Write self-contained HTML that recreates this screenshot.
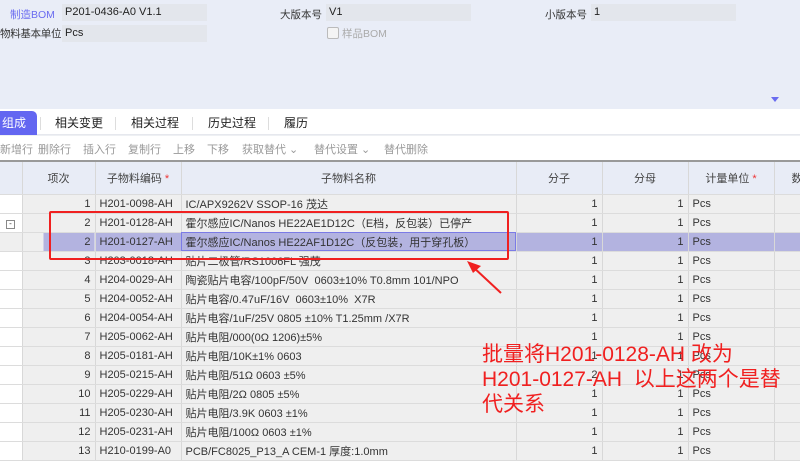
<!DOCTYPE html>
<html><head><meta charset="utf-8"><style>
*{margin:0;padding:0;box-sizing:border-box}
body{width:800px;height:451px;overflow:hidden;background:#eef0f3;font-family:"Liberation Sans","Noto Sans CJK SC",sans-serif;font-size:11px;color:#333;position:relative}
.top{position:absolute;left:0;top:0;width:800px;height:109px;background:#e9edf7}
.lbl{position:absolute;font-size:10.5px;color:#333;z-index:2}
.fld{position:absolute;height:17px;background:#e3e6ec;padding-left:3px;line-height:17px;font-size:11px;color:#222}
.tabs{position:absolute;top:109px;left:0;width:800px;height:26px;background:#fff;border-bottom:1px solid #e6e8ee}
.tab{position:absolute;top:2px;height:24px;line-height:24px;font-size:12px;color:#222}
.sep{position:absolute;top:8px;width:1px;height:13px;background:#ddd}
.tb{position:absolute;top:136px;left:0;width:800px;height:24px;background:#fff;color:#999;font-size:11px}
.tb span{position:absolute;top:5px}
table{position:absolute;top:160px;left:0;border-collapse:collapse;table-layout:fixed;width:820px}
td,th{height:19px;border-right:1px solid #d8d8d8;border-bottom:1px solid #dcdcdc;font-weight:normal;white-space:nowrap;overflow:hidden;padding:0 4px;font-size:11px;color:#333}
th{height:33px;background:#e8ecf6;border-top:2px solid #999;color:#444}
td{background:#efefef}
td.n{text-align:right}
tr.sel td{background:#b3b3e0}
.star{color:#e33}
</style></head><body>
<div class="top">
<div class="lbl" style="left:10px;top:7px;color:#6a6cf0">制造BOM</div>
<div class="fld" style="left:62px;top:4px;width:145px">P201-0436-A0 V1.1</div>
<div class="lbl" style="left:280px;top:7px">大版本号</div>
<div class="fld" style="left:326px;top:4px;width:145px">V1</div>
<div class="lbl" style="left:545px;top:7px">小版本号</div>
<div class="fld" style="left:591px;top:4px;width:145px">1</div>
<div class="lbl" style="left:0;top:26px;letter-spacing:-0.3px">物料基本单位</div>
<div class="fld" style="left:62px;top:25px;width:145px">Pcs</div>
<div style="position:absolute;left:327px;top:27px;width:12px;height:12px;border:1px solid #bbb;background:#f4f4f4;border-radius:2px"></div>
<div class="lbl" style="left:342px;top:26px;color:#aaa">样品BOM</div>
<div style="position:absolute;left:771px;top:97px;width:0;height:0;border-left:4px solid transparent;border-right:4px solid transparent;border-top:5px solid #6a6cf0"></div>
</div>
<div class="tabs">
<div class="tab" style="left:0;width:37px;background:#6366f1;color:#fff;border-radius:0 5px 0 0;padding-left:2px">组成</div>
<div class="sep" style="left:40px"></div>
<div class="tab" style="left:55px">相关变更</div>
<div class="sep" style="left:115px"></div>
<div class="tab" style="left:131px">相关过程</div>
<div class="sep" style="left:192px"></div>
<div class="tab" style="left:208px">历史过程</div>
<div class="sep" style="left:268px"></div>
<div class="tab" style="left:284px">履历</div>
</div>
<div class="tb"><span style="left:0">新增行</span><span style="left:38px">删除行</span><span style="left:83px">插入行</span><span style="left:128px">复制行</span><span style="left:173px">上移</span><span style="left:207px">下移</span><span style="left:242px">获取替代 ⌄</span><span style="left:314px">替代设置 ⌄</span><span style="left:384px">替代删除</span></div>
<table>
<colgroup><col style="width:22px"><col style="width:73px"><col style="width:86px"><col style="width:335px"><col style="width:86px"><col style="width:86px"><col style="width:86px"><col style="width:46px"></colgroup>
<tr><th></th><th>项次</th><th>子物料编码 <span class="star">*</span></th><th>子物料名称</th><th>分子</th><th>分母</th><th>计量单位 <span class="star">*</span></th><th>数</th></tr>
<tr><td style="background:#fff"></td><td class="n">1</td><td>H201-0098-AH</td><td>IC/APX9262V SSOP-16 茂达</td><td class="n">1</td><td class="n">1</td><td>Pcs</td><td></td></tr>
<tr><td style="background:#fff;padding:0 0 0 6px"><span style="display:inline-block;width:9px;height:9px;border:1px solid #888;font-size:8px;line-height:6px;text-align:center">-</span></td><td class="n">2</td><td>H201-0128-AH</td><td>霍尔感应IC/Nanos HE22AE1D12C（E档，反包装）已停产</td><td class="n">1</td><td class="n">1</td><td>Pcs</td><td></td></tr>
<tr class="sel"><td style="background:#efefef"></td><td class="n" style="background:linear-gradient(90deg,#efefef 21px,#b3b3e0 21px)">2</td><td>H201-0127-AH</td><td style="outline:1px solid #7b7be6;outline-offset:-1px">霍尔感应IC/Nanos HE22AF1D12C（反包装，用于穿孔板）</td><td class="n">1</td><td class="n">1</td><td>Pcs</td><td></td></tr>
<tr><td style="background:#fff"></td><td class="n">3</td><td>H203-0018-AH</td><td>贴片二极管/RS1006FL 强茂</td><td class="n">1</td><td class="n">1</td><td>Pcs</td><td></td></tr>
<tr><td style="background:#fff"></td><td class="n">4</td><td>H204-0029-AH</td><td>陶瓷贴片电容/100pF/50V&nbsp; 0603±10% T0.8mm 101/NPO</td><td class="n">1</td><td class="n">1</td><td>Pcs</td><td></td></tr>
<tr><td style="background:#fff"></td><td class="n">5</td><td>H204-0052-AH</td><td>贴片电容/0.47uF/16V&nbsp; 0603±10%&nbsp; X7R</td><td class="n">1</td><td class="n">1</td><td>Pcs</td><td></td></tr>
<tr><td style="background:#fff"></td><td class="n">6</td><td>H204-0054-AH</td><td>贴片电容/1uF/25V 0805 ±10% T1.25mm /X7R</td><td class="n">1</td><td class="n">1</td><td>Pcs</td><td></td></tr>
<tr><td style="background:#fff"></td><td class="n">7</td><td>H205-0062-AH</td><td>贴片电阻/000(0Ω 1206)±5%</td><td class="n">1</td><td class="n">1</td><td>Pcs</td><td></td></tr>
<tr><td style="background:#fff"></td><td class="n">8</td><td>H205-0181-AH</td><td>贴片电阻/10K±1% 0603</td><td class="n">1</td><td class="n">1</td><td>Pcs</td><td></td></tr>
<tr><td style="background:#fff"></td><td class="n">9</td><td>H205-0215-AH</td><td>贴片电阻/51Ω 0603 ±5%</td><td class="n">2</td><td class="n">1</td><td>Pcs</td><td></td></tr>
<tr><td style="background:#fff"></td><td class="n">10</td><td>H205-0229-AH</td><td>贴片电阻/2Ω 0805 ±5%</td><td class="n">1</td><td class="n">1</td><td>Pcs</td><td></td></tr>
<tr><td style="background:#fff"></td><td class="n">11</td><td>H205-0230-AH</td><td>贴片电阻/3.9K 0603 ±1%</td><td class="n">1</td><td class="n">1</td><td>Pcs</td><td></td></tr>
<tr><td style="background:#fff"></td><td class="n">12</td><td>H205-0231-AH</td><td>贴片电阻/100Ω 0603 ±1%</td><td class="n">1</td><td class="n">1</td><td>Pcs</td><td></td></tr>
<tr><td style="background:#fff"></td><td class="n">13</td><td>H210-0199-A0</td><td>PCB/FC8025_P13_A CEM-1 厚度:1.0mm</td><td class="n">1</td><td class="n">1</td><td>Pcs</td><td></td></tr>
</table>
<div style="position:absolute;left:49px;top:211px;width:460px;height:49px;border:2px solid #f02020;border-radius:2px"></div>
<svg style="position:absolute;left:0;top:0" width="800" height="451"><line x1="501" y1="293" x2="472" y2="266" stroke="#f02020" stroke-width="2"/><polygon points="467,261 481,266 473,273" fill="#f02020"/></svg>
<div style="position:absolute;left:482px;top:342px;width:330px;font-size:21px;line-height:25px;color:#f02020;white-space:nowrap">批量将H201-0128-AH 改为<br>H201-0127-AH&nbsp; 以上这两个是替<br>代关系</div>
</body></html>
